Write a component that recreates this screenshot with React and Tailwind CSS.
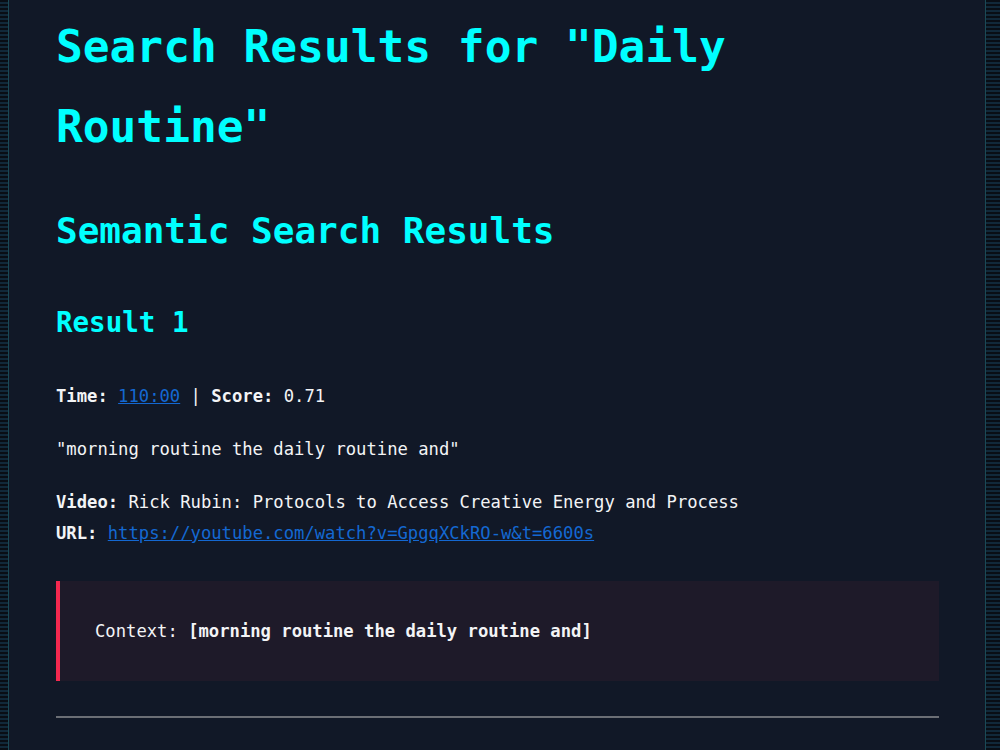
import React from "react";

const result = {
  time: "110:00",
  score: "0.71",
  snippet: "morning routine the daily routine and",
  video: "Rick Rubin: Protocols to Access Creative Energy and Process",
  url: "https://youtube.com/watch?v=GpgqXCkRO-w&t=6600s",
};

export default function App() {
  return (
    <div className="min-h-screen w-full bg-[repeating-linear-gradient(180deg,#090e15_0px,#090e15_2px,#11293a_2px,#11293a_4px)] font-['DejaVu_Sans_Mono',monospace]">
      <div className="ml-[8px] w-[978px] min-h-screen border-x border-[#1b4a55] bg-[#111827] pl-[47px] pr-[46px] pt-[7px] pb-10">
        <h1 className="text-[44.5px] leading-[80px] font-bold text-[#00ffff]">
          Search Results for "Daily Routine"
        </h1>

        <h2 className="mt-[35px] text-[36px] leading-[57px] font-bold text-[#00ffff]">
          Semantic Search Results
        </h2>

        <div>
          <h3 className="mt-[42px] text-[27.5px] leading-[43px] font-bold text-[#00ffff]">
            Result 1
          </h3>

          <div className="mt-[37px] text-[17.2px] leading-[31px] text-[#f3f4f6]">
            <p>
              <span className="font-bold">Time:</span>{" "}
              <a href="#" className="text-[#1468d2] underline">
                {result.time}
              </a>{" "}
              | <span className="font-bold">Score:</span> {result.score}
            </p>

            <p className="mt-[22px]">"{result.snippet}"</p>

            <p className="mt-[22px]">
              <span className="font-bold">Video:</span> {result.video}
              <br />
              <span className="font-bold">URL:</span>{" "}
              <a href="#" className="text-[#1468d2] underline">
                {result.url}
              </a>
            </p>

            <div className="mt-[32px] border-l-4 border-[#f4284f] bg-[#1e1a29] pt-[35px] pb-[34px] pl-[35px] pr-6">
              Context: <span className="font-bold">[{result.snippet}]</span>
            </div>
          </div>

          <hr className="mt-[35px] border-t-2 border-[#6b6e75]" />
        </div>
      </div>
    </div>
  );
}
